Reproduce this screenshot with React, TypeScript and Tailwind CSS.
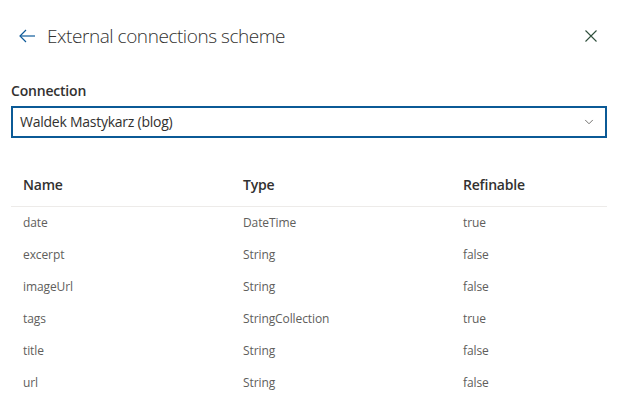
import { ChevronDown } from "lucide-react";

type FieldRow = {
  name: string;
  type: string;
  refinable: boolean;
};

const fields: FieldRow[] = [
  { name: "date", type: "DateTime", refinable: true },
  { name: "excerpt", type: "String", refinable: false },
  { name: "imageUrl", type: "String", refinable: false },
  { name: "tags", type: "StringCollection", refinable: true },
  { name: "title", type: "String", refinable: false },
  { name: "url", type: "String", refinable: false },
];

const font = { fontFamily: '"Segoe UI", "Open Sans", "Noto Sans", sans-serif' };

export default function App() {
  return (
    <main className="h-[419px] w-[620px] overflow-hidden bg-white pt-[24px] text-[#323130]" style={font}>
      {/* header */}
      <div className="flex h-[24px] items-center pl-[19px] pr-[22px]">
        <button className="flex h-[24px] w-[16px] items-center text-[#0f5b9a]" aria-label="Back">
          <svg width="16" height="14" viewBox="0 0 16 14" fill="none" stroke="currentColor" strokeWidth="1.2">
            <path d="M16 7H1" />
            <path d="M7 1L1 7l6 6" />
          </svg>
        </button>
        <h1 className="ml-[12px] flex-1 text-[19px] font-light leading-[24px] tracking-[-0.45px] text-[#323130]">
          External connections scheme
        </h1>
        <button className="flex h-[14px] w-[14px] items-center justify-center text-[#2f4f3c]" aria-label="Close">
          <svg width="12" height="12" viewBox="0 0 12 12" fill="none" stroke="currentColor" strokeWidth="1.1">
            <path d="M0.5 0.5l11 11M11.5 0.5l-11 11" />
          </svg>
        </button>
      </div>

      <div className="px-[11px]">
        <p className="mt-[33px] text-[14px] font-semibold leading-[20px] tracking-[-0.2px] text-[#323130]">Connection</p>
        <div className="mt-[5px] flex h-[32px] w-[596px] items-center justify-between border-2 border-[#0b5a96] pl-[7px] pr-[9px]">
          <span className="text-[14px] leading-[20px] tracking-[-0.25px] text-[#323130]">Waldek Mastykarz (blog)</span>
          <ChevronDown className="h-[14px] w-[14px] text-[#605e5c]" strokeWidth={1.5} />
        </div>

        <div className="mt-[29px] w-[596px]">
          <div className="flex h-[40px] items-center border-b border-[#edebe9] pb-[5px] text-[14px] font-semibold tracking-[-0.2px] text-[#323130]">
            <div className="w-[220px] pl-[12px]">Name</div>
            <div className="w-[220px] pl-[12px]">Type</div>
            <div className="flex-1 pl-[12px]">Refinable</div>
          </div>
          {fields.map((row) => (
            <div key={row.name} className="flex h-[32px] items-center text-[12px] tracking-[-0.1px] text-[#605e5c]">
              <div className="w-[220px] pl-[12px]">{row.name}</div>
              <div className="w-[220px] pl-[12px]">{row.type}</div>
              <div className="flex-1 pl-[12px]">{row.refinable ? "true" : "false"}</div>
            </div>
          ))}
        </div>
      </div>
    </main>
  );
}
